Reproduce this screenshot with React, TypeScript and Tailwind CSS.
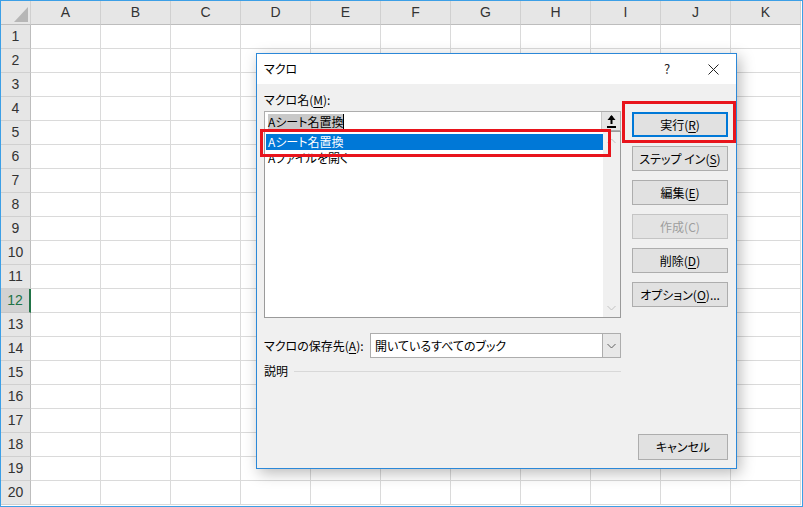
import React from 'react';

const COLS = ['A', 'B', 'C', 'D', 'E', 'F', 'G', 'H', 'I', 'J', 'K'];
const ROWS = Array.from({ length: 20 }, (_, i) => i + 1);

function Sheet() {
  return (
    <div className="grid grid-cols-[30px_repeat(11,70px)] grid-rows-[24px_repeat(20,24px)] font-['Liberation_Sans',Arial,sans-serif] text-[14px] text-[#333]">
      <div className="relative bg-[#e6e6e6] border-r border-b border-r-[#d0d0d0] border-b-[#bdbdbd]">
        <svg className="absolute right-[2px] bottom-[2px]" width="14" height="15" viewBox="0 0 14 15">
          <polygon points="14,0 14,15 0,15" fill="#b6b6b6" />
        </svg>
      </div>
      {COLS.map(c => (
        <div
          key={c}
          className="flex items-center justify-center bg-[#e6e6e6] border-r border-b border-r-[#d0d0d0] border-b-[#bdbdbd]"
        >
          {c}
        </div>
      ))}
      {ROWS.map(r => (
        <React.Fragment key={r}>
          {r === 12 ? (
            <div className="flex items-center justify-center bg-[#d2d2d2] text-[#217346] border-b border-b-[#c6c6c6] border-r-2 border-r-[#217346]">
              {r}
            </div>
          ) : (
            <div className="flex items-center justify-center bg-[#e6e6e6] border-b border-r border-b-[#d0d0d0] border-r-[#bdbdbd]">
              {r}
            </div>
          )}
          {COLS.map(c => (
            <div key={c} className="bg-white border-r border-b border-[#dadada]" />
          ))}
        </React.Fragment>
      ))}
    </div>
  );
}

function Mn({ k }: { k: string }) {
  return <span className="underline underline-offset-[2px]">{k}</span>;
}

function Btn({ children, variant = 'normal' }: { children: React.ReactNode; variant?: 'normal' | 'primary' | 'disabled' }) {
  if (variant === 'primary') {
    return (
      <div className="flex items-center justify-center h-[25px] bg-[#e1e1e1] border-2 border-[#0078d7]">{children}</div>
    );
  }
  if (variant === 'disabled') {
    return (
      <div className="flex items-center justify-center h-[25px] bg-[#e3e3e3] border border-[#c4c4c4] text-[#9d9d9d]">{children}</div>
    );
  }
  return (
    <div className="flex items-center justify-center h-[25px] bg-[#e1e1e1] border border-[#adadad]">{children}</div>
  );
}

function Chevron({ up, color = '#a8a8a8' }: { up?: boolean; color?: string }) {
  return (
    <svg width="9" height="6" viewBox="0 0 9 6">
      <polyline
        points={up ? '0.5,5 4.5,1 8.5,5' : '0.5,1 4.5,5 8.5,1'}
        fill="none"
        stroke={color}
        strokeWidth="1"
      />
    </svg>
  );
}

function MacroDialog() {
  return (
    <div className="absolute left-[255px] top-[52px] w-[481px] h-[416px] flex flex-col border border-[#2b88d8] bg-[#f0f0f0] shadow-[3px_4px_14px_rgba(0,0,0,0.28)] font-['Noto_Sans_CJK_JP','Noto_Sans',sans-serif] text-[12px] text-black [font-feature-settings:'palt']">
      {/* title bar */}
      <div className="flex items-center h-[30px] bg-white shrink-0">
        <div className="flex-1 pl-[7px]">マクロ</div>
        <div className="w-[46px] text-center text-[13px] text-[#222]">?</div>
        <div className="w-[46px] flex items-center justify-center">
          <svg width="11" height="11" viewBox="0 0 11 11">
            <path d="M0.5 0.5 L10.5 10.5 M10.5 0.5 L0.5 10.5" stroke="#222" strokeWidth="1" />
          </svg>
        </div>
      </div>

      {/* body */}
      <div className="flex flex-1 pl-[7px] pr-[7px] gap-[11px]">
        <div className="w-[357px] flex flex-col pt-[6px]">
          <div className="h-[21px] leading-[20px]">
            マクロ名(<Mn k="M" />):
          </div>
          <div className="flex h-[20px] bg-white border border-[#adadad]">
            <div className="flex-1 flex items-center pl-[3px]">
              <span className="bg-[#c8c8c8] leading-[15px]">Aシート名置換</span>
              <span className="w-[1px] h-[15px] bg-black" />
            </div>
            <div className="w-[19px] flex items-center justify-center bg-[#e5e5e5] border-l border-[#c8c8c8]">
              <svg width="9" height="13" viewBox="0 0 9 13">
                <path d="M4.5 1 L4.5 9" stroke="#000" strokeWidth="2" />
                <polygon points="4.5,0 8.5,5 0.5,5" fill="#000" />
                <rect x="0" y="11" width="9" height="2" fill="#000" />
              </svg>
            </div>
          </div>
          <div className="flex h-[187px] bg-white border border-[#9a9a9a]">
            <div className="flex-1 flex flex-col pt-[2px] pl-[1px]">
              <div className="h-[16px] leading-[16px] pl-[2px] bg-[#0078d7] text-white">Aシート名置換</div>
              <div className="h-[16px] leading-[16px] pl-[2px]">Aファイルを開く</div>
            </div>
            <div className="w-[17px] flex flex-col items-center justify-between bg-[#f0f0f0] pt-[6px] pb-[6px]">
              <Chevron up color="#c2c2c2" />
              <Chevron color="#c2c2c2" />
            </div>
          </div>
          <div className="flex items-center mt-[15px] h-[25px]">
            <div className="w-[106px]">
              マクロの保存先(<Mn k="A" />):
            </div>
            <div className="flex-1 flex h-full bg-white border border-[#adadad]">
              <div className="flex-1 flex items-center pl-[4px]">開いているすべてのブック</div>
              <div className="w-[18px] flex items-center justify-center bg-[#e8e8e8] border-l border-[#adadad]">
                <Chevron color="#606060" />
              </div>
            </div>
          </div>
          <div className="flex items-center mt-[4px] h-[18px]">
            <span>説明</span>
            <div className="flex-1 ml-[6px] border-t border-[#d8d8d8]" />
          </div>
        </div>

        <div className="w-[96px] flex flex-col pt-[28px] pb-[8px] gap-[9px]">
          <Btn variant="primary">
            実行(<Mn k="R" />)
          </Btn>
          <Btn>
            ステップ イン(<Mn k="S" />)
          </Btn>
          <Btn>
            編集(<Mn k="E" />)
          </Btn>
          <Btn variant="disabled">作成(C)</Btn>
          <Btn>
            削除(<Mn k="D" />)
          </Btn>
          <Btn>
            オプション(<Mn k="O" />)...
          </Btn>
          <div className="mt-auto self-end w-[90px] h-[26px] flex items-center justify-center bg-[#e1e1e1] border border-[#adadad]">
            キャンセル
          </div>
        </div>
      </div>
    </div>
  );
}

export default function App() {
  return (
    <div className="relative w-[803px] h-[507px] overflow-hidden bg-white border border-[#3c9fe6]">
      <Sheet />
      <MacroDialog />
      {/* red annotation boxes */}
      <div className="absolute left-[259px] top-[128px] w-[351px] h-[28px] border-[3px] border-[#e8141c]" />
      <div className="absolute left-[621px] top-[100px] w-[114px] h-[42px] border-[3px] border-[#e8141c]" />
    </div>
  );
}
